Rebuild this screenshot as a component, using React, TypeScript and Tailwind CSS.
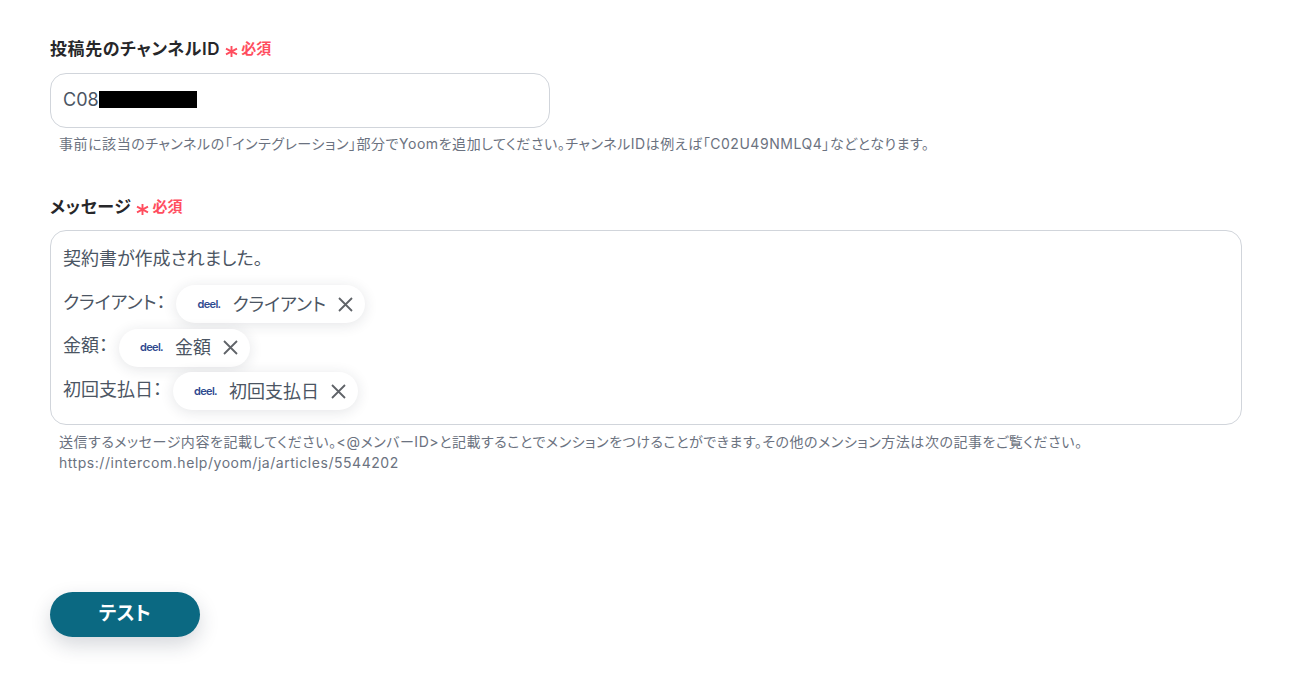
import React from 'react';

const FieldLabel: React.FC<{ text: string }> = ({ text }) => (
  <div className="flex items-center h-6">
    <span className="text-[17px] font-semibold tracking-[0.035em] text-[#27272a] leading-6">{text}</span>
    <svg className="ml-[5px] mt-[4px]" width="13" height="13" viewBox="0 0 13 13" aria-hidden="true">
      <path d="M6.5 1v11M1 3.7l11 5.6M12 3.7L1 9.3" stroke="#ff4d5e" strokeWidth="1.9" fill="none" />
    </svg>
    <span className="ml-[3px] text-[15px] font-semibold text-[#ff4d5e] leading-6">必須</span>
  </div>
);

const Chip: React.FC<{ label: string }> = ({ label }) => (
  <span className="inline-flex items-center h-[38px] rounded-full bg-white pl-[21px] pr-[12px] shadow-[0_2px_14px_rgba(30,41,59,0.12)]">
    <span className="w-[22px] text-[11px] font-semibold tracking-[-0.06em] text-[#2f4a8f] leading-none">deel.</span>
    <span className="ml-[13px] text-[18px] text-[#4b5563]">{label}</span>
    <svg className="ml-[12px]" width="15" height="15" viewBox="0 0 15 15" aria-hidden="true">
      <path d="M1 1l13 13M14 1L1 14" stroke="#5f6368" strokeWidth="1.8" fill="none" />
    </svg>
  </span>
);

const rows = ['クライアント', '金額', '初回支払日'];

const App: React.FC = () => {
  return (
    <div className="font-['Inter','Noto_Sans_CJK_JP',sans-serif] [font-feature-settings:'palt'] w-[1289px] h-[683px] bg-white pl-[50px] pt-[37px] overflow-hidden">
      <FieldLabel text="投稿先のチャンネルID" />
      <div className="mt-3 w-[500px] h-[55px] rounded-2xl border border-[#d1d5db] flex items-center pl-3 pb-[3px]">
        <span className="text-[18px] text-[#4b5563]">C08</span>
        <span className="w-[98px] h-[17px] bg-black" />
      </div>
      <p className="mt-[6px] ml-[9px] text-[14px] leading-[20px] tracking-[0.54px] text-[#6b7280]">
        事前に該当のチャンネルの「インテグレーション」部分でYoomを追加してください。チャンネルIDは例えば「C02U49NMLQ4」などとなります。
      </p>

      <div className="mt-[41px]">
        <FieldLabel text="メッセージ" />
      </div>
      <div className="mt-[11px] w-[1192px] h-[195px] rounded-2xl border border-[#d1d5db] pl-3 pt-[14px]">
        <p className="text-[18px] leading-[28px] text-[#4b5563]">契約書が作成されました。</p>
        <div className="mt-[12px] flex flex-col gap-[5.5px]">
          {rows.map(r => (
            <div key={r} className="flex items-center h-[38px]">
              <span className="text-[18px] text-[#4b5563] pb-[4px] mr-[11px]">{r}：</span>
              <Chip label={r} />
            </div>
          ))}
        </div>
      </div>
      <p className="mt-[6px] ml-[9px] text-[14px] leading-[21px] tracking-[0.54px] text-[#6b7280]">
        送信するメッセージ内容を記載してください。&lt;@メンバーID&gt;と記載することでメンションをつけることができます。その他のメンション方法は次の記事をご覧ください。
        <br />
        https://intercom.help/yoom/ja/articles/5544202
      </p>

      <button className="mt-[119px] w-[150px] h-[45px] rounded-full bg-[#0b6982] text-white text-[19px] font-bold tracking-[0.3px] shadow-[0_8px_20px_rgba(30,41,59,0.18)]">
        テスト
      </button>
    </div>
  );
};

export default App;
